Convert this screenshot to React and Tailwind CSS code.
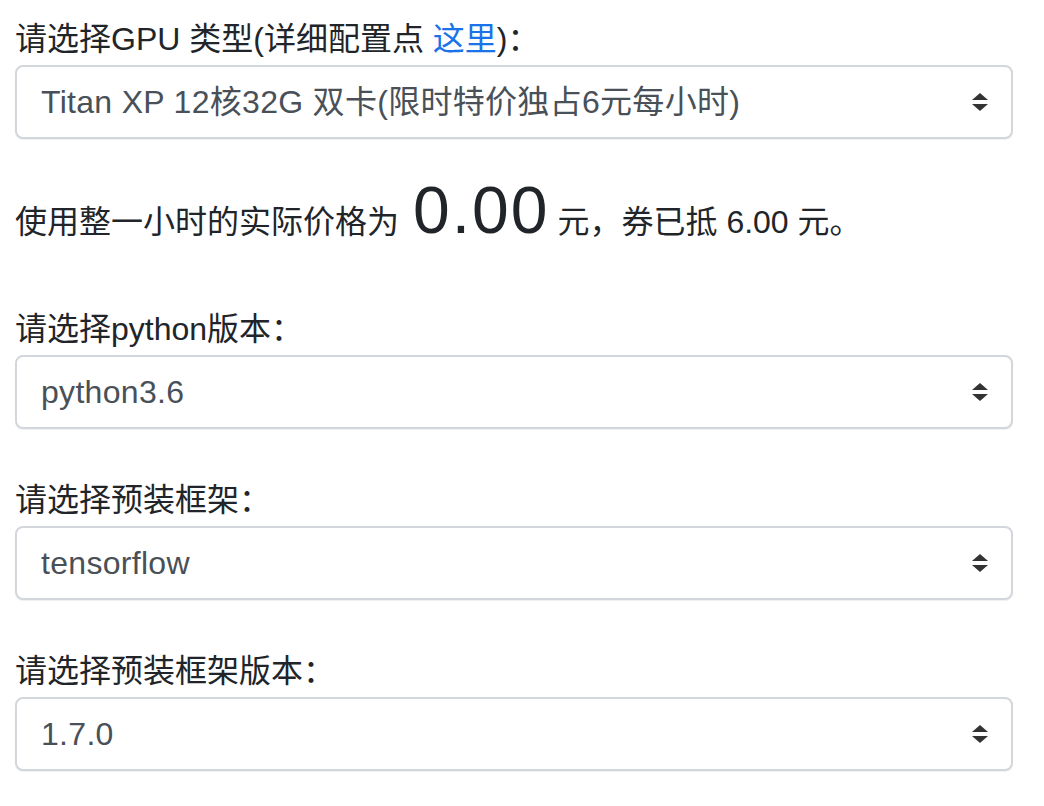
import React from 'react';

const font = { fontFamily: '"Liberation Sans", "Noto Sans CJK SC", sans-serif' };

const Arrows = () => (
  <svg width="18" height="20" viewBox="0 0 18 20" className="shrink-0">
    <path d="M9 1 L17 8 L1 8 Z" fill="#333" />
    <path d="M1 12 L17 12 L9 19 Z" fill="#333" />
  </svg>
);

const SelectBox = ({ value }) => (
  <div className="w-[998px] h-[74px] border-2 border-[#d3d7db] rounded-[8px] bg-white flex items-center justify-between pl-[24px] pr-[22px] text-[32px] tracking-[0.3px] text-[#495057] shadow-[0_1px_1px_rgba(0,0,0,0.06)]">
    <span>{value}</span>
    <Arrows />
  </div>
);

const Field = ({ label, value, className = '' }) => (
  <div className={className}>
    <div className="h-[46px] leading-[46px] text-[32px] text-[#212529] mb-[3px] whitespace-nowrap">{label}</div>
    <SelectBox value={value} />
  </div>
);

export default function App() {
  return (
    <div style={font} className="w-[1044px] h-[806px] bg-white pt-[16px] px-[15px] overflow-hidden">
      <Field
        label={
          <>
            请选择GPU 类型(详细配置点 <a href="#" className="text-[#1a73e8]">这里</a>)：
          </>
        }
        value="Titan XP 12核32G 双卡(限时特价独占6元每小时)"
      />

      <div className="mt-[38px] flex items-baseline text-[#212529] whitespace-nowrap">
        <span className="text-[32px] leading-none">使用整一小时的实际价格为</span>
        <span className="text-[66px] leading-none tracking-[2px] ml-[14px] mr-[8px]">0.00</span>
        <span className="text-[32px] leading-none">元，券已抵 6.00 元。</span>
      </div>

      <Field className="mt-[63px]" label="请选择python版本：" value="python3.6" />
      <Field className="mt-[48px]" label="请选择预装框架：" value="tensorflow" />
      <Field className="mt-[48px]" label="请选择预装框架版本：" value="1.7.0" />
    </div>
  );
}
